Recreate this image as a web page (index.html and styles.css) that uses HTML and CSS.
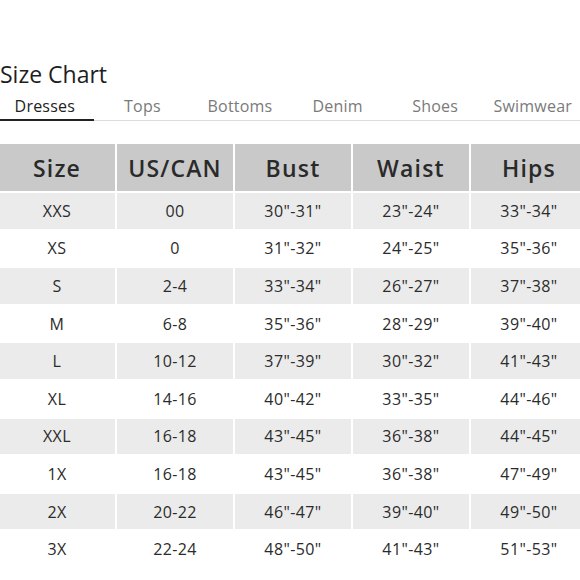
FILE: index.html
```html
<!DOCTYPE html>
<html>
<head>
<meta charset="utf-8">
<link rel="stylesheet" href="styles.css">
</head>
<body>
<div class="page">
  <h1 class="title">Size Chart</h1>
  <nav class="tabs">
    <div class="tab active">Dresses</div>
    <div class="tab">Tops</div>
    <div class="tab">Bottoms</div>
    <div class="tab">Denim</div>
    <div class="tab">Shoes</div>
    <div class="tab">Swimwear</div>
  </nav>
  <table class="chart">
    <thead>
      <tr><th>Size</th><th>US/CAN</th><th>Bust</th><th>Waist</th><th>Hips</th></tr>
    </thead>
    <tbody>
      <tr><td>XXS</td><td>00</td><td>30"-31"</td><td>23"-24"</td><td>33"-34"</td></tr>
      <tr><td>XS</td><td>0</td><td>31"-32"</td><td>24"-25"</td><td>35"-36"</td></tr>
      <tr><td>S</td><td>2-4</td><td>33"-34"</td><td>26"-27"</td><td>37"-38"</td></tr>
      <tr><td>M</td><td>6-8</td><td>35"-36"</td><td>28"-29"</td><td>39"-40"</td></tr>
      <tr><td>L</td><td>10-12</td><td>37"-39"</td><td>30"-32"</td><td>41"-43"</td></tr>
      <tr><td>XL</td><td>14-16</td><td>40"-42"</td><td>33"-35"</td><td>44"-46"</td></tr>
      <tr><td>XXL</td><td>16-18</td><td>43"-45"</td><td>36"-38"</td><td>44"-45"</td></tr>
      <tr><td>1X</td><td>16-18</td><td>43"-45"</td><td>36"-38"</td><td>47"-49"</td></tr>
      <tr><td>2X</td><td>20-22</td><td>46"-47"</td><td>39"-40"</td><td>49"-50"</td></tr>
      <tr><td>3X</td><td>22-24</td><td>48"-50"</td><td>41"-43"</td><td>51"-53"</td></tr>
    </tbody>
  </table>
</div>
</body>
</html>
```
FILE: styles.css
```css
html, body {
  margin: 0;
  padding: 0;
  background: #ffffff;
  overflow: hidden;
}
body {
  font-family: "Open Sans", "Liberation Sans", sans-serif;
  color: #2b2b2b;
  width: 580px;
  height: 580px;
}
.page {
  padding-top: 58px;
}
.title {
  margin: 0;
  font-size: 23px;
  font-weight: 400;
  line-height: 32px;
  color: #1e1e1e;
}
.tabs {
  display: flex;
  margin-top: 2px;
  margin-left: -4px;
  border-bottom: 1px solid #dcdcdc;
  width: 600px;
}
.tab {
  width: 97.6px;
  flex: none;
  text-align: center;
  font-size: 16px;
  line-height: 26px;
  color: #7a7a7a;
  padding-top: 1px;
  padding-bottom: 0;
  letter-spacing: 0.2px;
}
.tab.active {
  color: #222;
  border-bottom: 2px solid #222;
  margin-bottom: -1px;
  padding-bottom: 0;
}
.chart {
  margin-top: 21px;
  margin-left: -3px;
  border-collapse: separate;
  border-spacing: 2px;
  table-layout: fixed;
  width: 592px;
}
.chart th {
  background: #c9c9c9;
  height: 47px;
  padding: 0;
  font-size: 23px;
  font-weight: 600;
  color: #2a2a2a;
  text-align: center;
  letter-spacing: 1.2px;
}
.chart td {
  height: 35.6px;
  padding: 0;
  font-size: 16px;
  text-align: center;
  color: #2b2b2b;
  letter-spacing: 0.4px;
}
.chart tbody tr:nth-child(odd) td {
  background: #ebebeb;
}
```
